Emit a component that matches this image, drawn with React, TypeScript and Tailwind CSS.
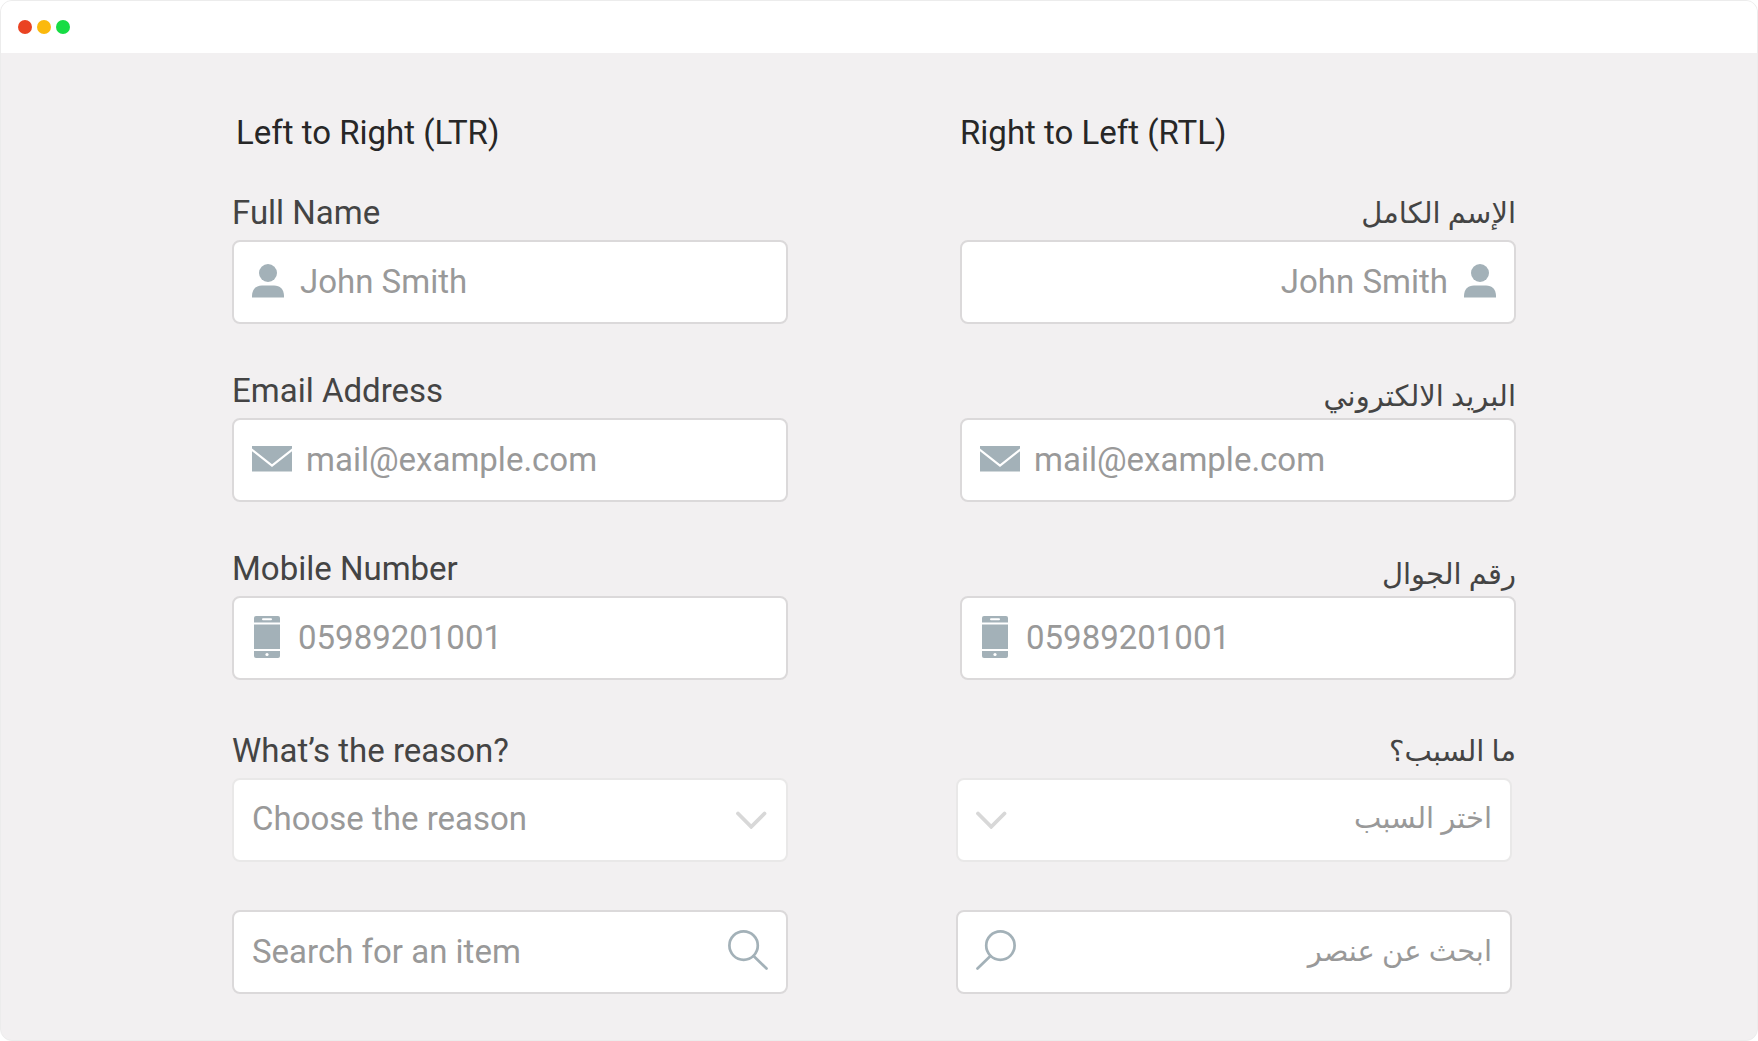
import type { ReactNode } from "react";

const ICON = "#a3b1b8";

function PersonIcon() {
  return (
    <svg width="32" height="34" viewBox="0 0 32 34" fill={ICON} className="shrink-0" aria-hidden="true">
      <circle cx="16" cy="9" r="9" />
      <path d="M0 33.5V32C0 25.5 4 21.5 10 21.5H22C28 21.5 32 25.5 32 32V33.5Z" />
    </svg>
  );
}

function MailIcon() {
  return (
    <svg width="40" height="26" viewBox="0 0 40 26" className="-mr-0.5 shrink-0" aria-hidden="true">
      <path d="M0 0H40V25.5H0Z" fill={ICON} />
      <path d="M-1 3L20 19.5L41 3" fill="none" stroke="#fff" strokeWidth="2.2" />
    </svg>
  );
}

function PhoneIcon() {
  return (
    <svg width="30" height="42" viewBox="0 0 30 42" className="shrink-0" aria-hidden="true">
      <rect x="2" y="0" width="26" height="42" rx="2" fill={ICON} />
      <path d="M2 7.5H28M2 34H28" stroke="#fff" strokeWidth="2" />
      <path d="M11 3.2H19" stroke="#fff" strokeWidth="2" strokeLinecap="round" />
      <circle cx="15" cy="38.5" r="1.6" fill="#fff" />
    </svg>
  );
}

function SearchIcon({ flipped }: { flipped?: boolean }) {
  return (
    <svg
      width="40"
      height="40"
      viewBox="0 0 40 40"
      fill="none"
      stroke={ICON}
      strokeWidth="2.7"
      strokeLinecap="round"
      className={flipped ? "shrink-0 -scale-x-100" : "shrink-0"}
      aria-hidden="true"
    >
      <circle cx="15.6" cy="15.6" r="14.2" />
      <path d="M25.6 26L38.5 38.5" />
    </svg>
  );
}

function ChevronIcon() {
  return (
    <svg width="32" height="18" viewBox="0 0 32 18" fill="none" stroke="#d8d8d8" strokeWidth="3.8" strokeLinecap="round" className="pointer-events-none shrink-0" aria-hidden="true">
      <path d="M2 2.5L15.2 15.8L28.5 2.5" />
    </svg>
  );
}

const boxBase = "flex h-21 items-center rounded-lg border-2 bg-white px-[18px]";
const controlBase =
  "h-full min-w-0 flex-1 appearance-none bg-transparent text-[#999] outline-none placeholder:text-[#999] placeholder:opacity-100";
const latin = "text-[33px]";
const arabic = "text-[29px]";

type FieldProps = {
  id: string;
  label: string;
  rtlLabel?: boolean;
  low?: boolean;
  children: ReactNode;
};

function Field({ id, label, rtlLabel, low, children }: FieldProps) {
  return (
    <div className="flex flex-col">
      <label
        htmlFor={id}
        dir={rtlLabel ? "rtl" : "ltr"}
        className={`h-10 whitespace-nowrap text-[#444] ${rtlLabel ? arabic : latin} ${low ? "mb-0.5 mt-[5px]" : "mb-[7px]"} leading-10`}
      >
        {label}
      </label>
      {children}
    </div>
  );
}

type TextBoxProps = { id: string; type: string; placeholder: string; icon: ReactNode; dir?: "ltr" | "rtl" };

function TextBox({ id, type, placeholder, icon, dir = "ltr" }: TextBoxProps) {
  return (
    <div dir={dir} className={`${boxBase} gap-4 border-[#dbd9da] pb-0.5`}>
      {icon}
      <input id={id} type={type} placeholder={placeholder} className={`${controlBase} ${latin}`} />
    </div>
  );
}

function SelectBox({ id, option, dir = "ltr" }: { id: string; option: string; dir?: "ltr" | "rtl" }) {
  return (
    <div dir={dir} className={`${boxBase} border-[#e9e8e8]`}>
      <select id={id} className={`${controlBase} pb-0.5 ${dir === "rtl" ? arabic : latin}`}>
        <option>{option}</option>
      </select>
      <ChevronIcon />
    </div>
  );
}

function SearchBox({ id, placeholder, dir = "ltr" }: { id: string; placeholder: string; dir?: "ltr" | "rtl" }) {
  return (
    <div dir={dir} className={`${boxBase} mt-12 border-[#dbd9da] pb-0.5`}>
      <input
        id={id}
        type="text"
        aria-label={placeholder}
        placeholder={placeholder}
        className={`${controlBase} ${dir === "rtl" ? arabic : latin}`}
      />
      <button type="button" aria-label={placeholder} className="pb-0.5">
        <SearchIcon flipped={dir === "rtl"} />
      </button>
    </div>
  );
}

export default function App() {
  return (
    <div className="flex min-h-screen flex-col overflow-hidden rounded-xl border border-[#ececec] bg-[#f2f0f1] font-[Roboto,'DejaVu_Sans',sans-serif]">
      <header className="flex h-[52px] items-center gap-[5px] bg-white px-[17px]">
        <span className="size-3.5 rounded-full bg-[#ea4322]" />
        <span className="size-3.5 rounded-full bg-[#fbb90d]" />
        <span className="size-3.5 rounded-full bg-[#16dc44]" />
      </header>

      <main className="grid grid-cols-2 gap-x-43 pb-10 pl-[231px] pr-[241px] pt-[60px]">
        <form className="min-w-0">
          <h2 className="mb-10 whitespace-nowrap pl-1 text-[33px] leading-10 text-[#272727]">Left to Right (LTR)</h2>
          <div className="flex flex-col gap-[47px]">
            <Field id="name-ltr" label="Full Name">
              <TextBox id="name-ltr" type="text" placeholder="John Smith" icon={<PersonIcon />} />
            </Field>
            <Field id="email-ltr" label="Email Address">
              <TextBox id="email-ltr" type="email" placeholder="mail@example.com" icon={<MailIcon />} />
            </Field>
            <Field id="mobile-ltr" label="Mobile Number">
              <TextBox id="mobile-ltr" type="tel" placeholder="05989201001" icon={<PhoneIcon />} />
            </Field>
          </div>
          <div className="mt-[51px]">
            <Field id="reason-ltr" label="What’s the reason?">
              <SelectBox id="reason-ltr" option="Choose the reason" />
            </Field>
            <SearchBox id="search-ltr" placeholder="Search for an item" />
          </div>
        </form>

        <form className="min-w-0">
          <h2 className="mb-10 whitespace-nowrap text-[33px] leading-10 text-[#272727]">Right to Left (RTL)</h2>
          <div className="flex flex-col gap-[47px]">
            <Field id="name-rtl" label="الإسم الكامل" rtlLabel>
              <TextBox id="name-rtl" type="text" placeholder="John Smith" icon={<PersonIcon />} dir="rtl" />
            </Field>
            <Field id="email-rtl" label="البريد الالكتروني" rtlLabel low>
              <TextBox id="email-rtl" type="email" placeholder="mail@example.com" icon={<MailIcon />} />
            </Field>
            <Field id="mobile-rtl" label="رقم الجوال" rtlLabel low>
              <TextBox id="mobile-rtl" type="tel" placeholder="05989201001" icon={<PhoneIcon />} />
            </Field>
          </div>
          <div className="mt-[51px]">
            <Field id="reason-rtl" label="ما السبب؟" rtlLabel>
              <div className="-ml-1 mr-1">
                <SelectBox id="reason-rtl" option="اختر السبب" dir="rtl" />
              </div>
            </Field>
            <div className="-ml-1 mr-1">
              <SearchBox id="search-rtl" placeholder="ابحث عن عنصر" dir="rtl" />
            </div>
          </div>
        </form>
      </main>
    </div>
  );
}
